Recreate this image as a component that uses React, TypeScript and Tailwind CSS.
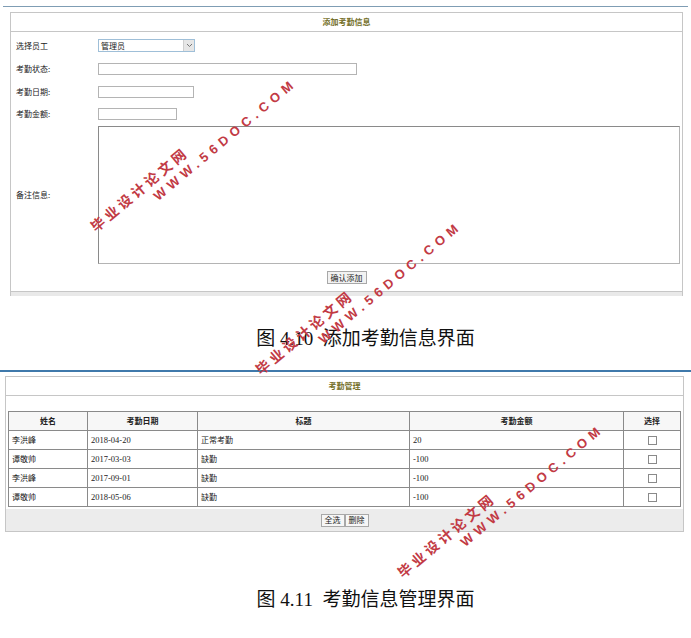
import React from 'react';

const cjk = { fontFamily: '"Noto Sans CJK SC", "Liberation Sans", sans-serif' };
const serif = { fontFamily: '"Liberation Serif", "Noto Sans CJK SC", serif' };

const rows = [
    { name: '李洪峰', date: '2018-04-20', title: '正常考勤', amount: '20' },
    { name: '谭敬帅', date: '2017-03-03', title: '缺勤', amount: '-100' },
    { name: '李洪峰', date: '2017-09-01', title: '缺勤', amount: '-100' },
    { name: '谭敬帅', date: '2018-05-06', title: '缺勤', amount: '-100' },
];

const Watermark: React.FC<{ x: number; y: number }> = ({ x, y }) => (
    <div
        className="absolute origin-top-left -rotate-[40deg] pointer-events-none text-[#c23a44] font-bold whitespace-nowrap"
        style={{ left: x, top: y }}
    >
        <div className="text-[14px] leading-[16px] tracking-[3.5px]" style={cjk}>毕业设计论文网</div>
        <div className="ml-[68px] mt-[2px] text-[13px] leading-[15px] tracking-[5px]" style={{ fontFamily: '"Liberation Sans", sans-serif' }}>
            WWW.56DOC.COM
        </div>
    </div>
);

const Input: React.FC<{ w: string }> = ({ w }) => (
    <div className={`${w} h-[12px] border border-[#b4b4b4] bg-white`} />
);

const App: React.FC = () => {
    return (
        <div className="relative w-[691px] h-[638px] overflow-hidden bg-white text-[#222]" style={cjk}>
            <div className="pt-[6px]">
                <div className="mx-[3px] h-px bg-[#7f9db4]" />

                {/* add form panel */}
                <div className="mt-[5px] ml-[10px] w-[673px] border border-b-0 border-[#c6c6c6]">
                    <div className="h-[19px] border-b border-[#c6c6c6] flex items-center justify-center text-[8px] font-bold text-[#75702a]">
                        添加考勤信息
                    </div>
                    <div className="pt-[2px] text-[8px]">
                        <div className="flex items-center h-[23px]">
                            <div className="w-[87px] pl-[5px]">选择员工</div>
                            <div className="w-[97px] h-[13px] border border-[#9fbfd8] bg-white flex items-center justify-between">
                                <span className="pl-[2px] leading-none">管理员</span>
                                <span className="w-[11px] h-full bg-[#e6e6e6] border-l border-[#cfcfcf] flex items-center justify-center">
                                    <svg width="7" height="5" viewBox="0 0 7 5">
                                        <path d="M1 1l2.5 2.5L6 1" fill="none" stroke="#777" strokeWidth="1" />
                                    </svg>
                                </span>
                            </div>
                        </div>
                        <div className="flex items-center h-[23px]">
                            <div className="w-[87px] pl-[5px]">考勤状态:</div>
                            <Input w="w-[259px]" />
                        </div>
                        <div className="flex items-center h-[23px]">
                            <div className="w-[87px] pl-[5px]">考勤日期:</div>
                            <Input w="w-[96px]" />
                        </div>
                        <div className="flex items-center h-[22px]">
                            <div className="w-[87px] pl-[5px]">考勤金额:</div>
                            <Input w="w-[79px]" />
                        </div>
                        <div className="flex items-center mt-[1px]">
                            <div className="w-[87px] pl-[5px]">备注信息:</div>
                            <div className="w-[582px] h-[138px] border border-[#b4b4b4] border-t-[#8a8a8a] border-l-[#8a8a8a] bg-white" />
                        </div>
                        <div className="flex justify-center pt-[7px] pb-[7px]">
                            <div className="h-[13px] px-[3px] border border-[#a8a8a8] bg-[#f2f2f2] flex items-center leading-none">确认添加</div>
                        </div>
                    </div>
                    <div className="h-[5px] border-t border-[#c6c6c6] bg-[#e9e9e9]" />
                </div>

                <div className="mt-[33px] flex justify-center">
                    <div className="text-[19px] leading-[20px] pl-[40px] text-[#111]" style={serif}>
                        图 4.10&nbsp; 添加考勤信息界面
                    </div>
                </div>

                <div className="mt-[21px] h-[2px] bg-[#3f79ab]" />

                {/* manage panel */}
                <div className="mt-[4px] ml-[5px] w-[679px] border border-[#c6c6c6]">
                    <div className="h-[19px] border-b border-[#c6c6c6] flex items-center justify-center text-[8px] font-bold text-[#75702a]">
                        考勤管理
                    </div>
                    <div className="pt-[15px] pl-[2px]">
                        <table className="w-[672px] border-collapse border border-[#8a8a8a] text-[8px] table-fixed">
                            <colgroup>
                                <col className="w-[79px]" />
                                <col className="w-[110px]" />
                                <col className="w-[212px]" />
                                <col className="w-[214px]" />
                                <col className="w-[57px]" />
                            </colgroup>
                            <thead>
                                <tr className="h-[19px] bg-[#f7f7f7]">
                                    {['姓名', '考勤日期', '标题', '考勤金额', '选择'].map((h) => (
                                        <th key={h} className="border border-[#8a8a8a] font-bold text-center">{h}</th>
                                    ))}
                                </tr>
                            </thead>
                            <tbody>
                                {rows.map((r, i) => (
                                    <tr key={i} className="h-[19px]">
                                        <td className="border border-[#8a8a8a] pl-[3px]">{r.name}</td>
                                        <td className="border border-[#8a8a8a] pl-[3px] text-[8.5px]" style={serif}>{r.date}</td>
                                        <td className="border border-[#8a8a8a] pl-[3px]">{r.title}</td>
                                        <td className="border border-[#8a8a8a] pl-[3px] text-[8.5px]" style={serif}>{r.amount}</td>
                                        <td className="border border-[#8a8a8a]">
                                            <div className="mx-auto w-[9px] h-[9px] border border-[#8a8a8a] bg-white" />
                                        </td>
                                    </tr>
                                ))}
                            </tbody>
                        </table>
                    </div>
                    <div className="mt-[2px] h-[22px] bg-[#ececec] flex items-center justify-center text-[8px]">
                        <div className="h-[13px] px-[3px] border border-[#a8a8a8] bg-[#f6f6f6] flex items-center leading-none">全选</div>
                        <div className="h-[13px] px-[3px] border border-[#a8a8a8] bg-[#f6f6f6] flex items-center leading-none">删除</div>
                    </div>
                </div>

                <div className="mt-[58px] flex justify-center">
                    <div className="text-[19px] leading-[20px] pl-[40px] text-[#111]" style={serif}>
                        图 4.11&nbsp; 考勤信息管理界面
                    </div>
                </div>
            </div>

            <Watermark x={87} y={222} />
            <Watermark x={252} y={365} />
            <Watermark x={394} y={568} />
        </div>
    );
};

export default App;
